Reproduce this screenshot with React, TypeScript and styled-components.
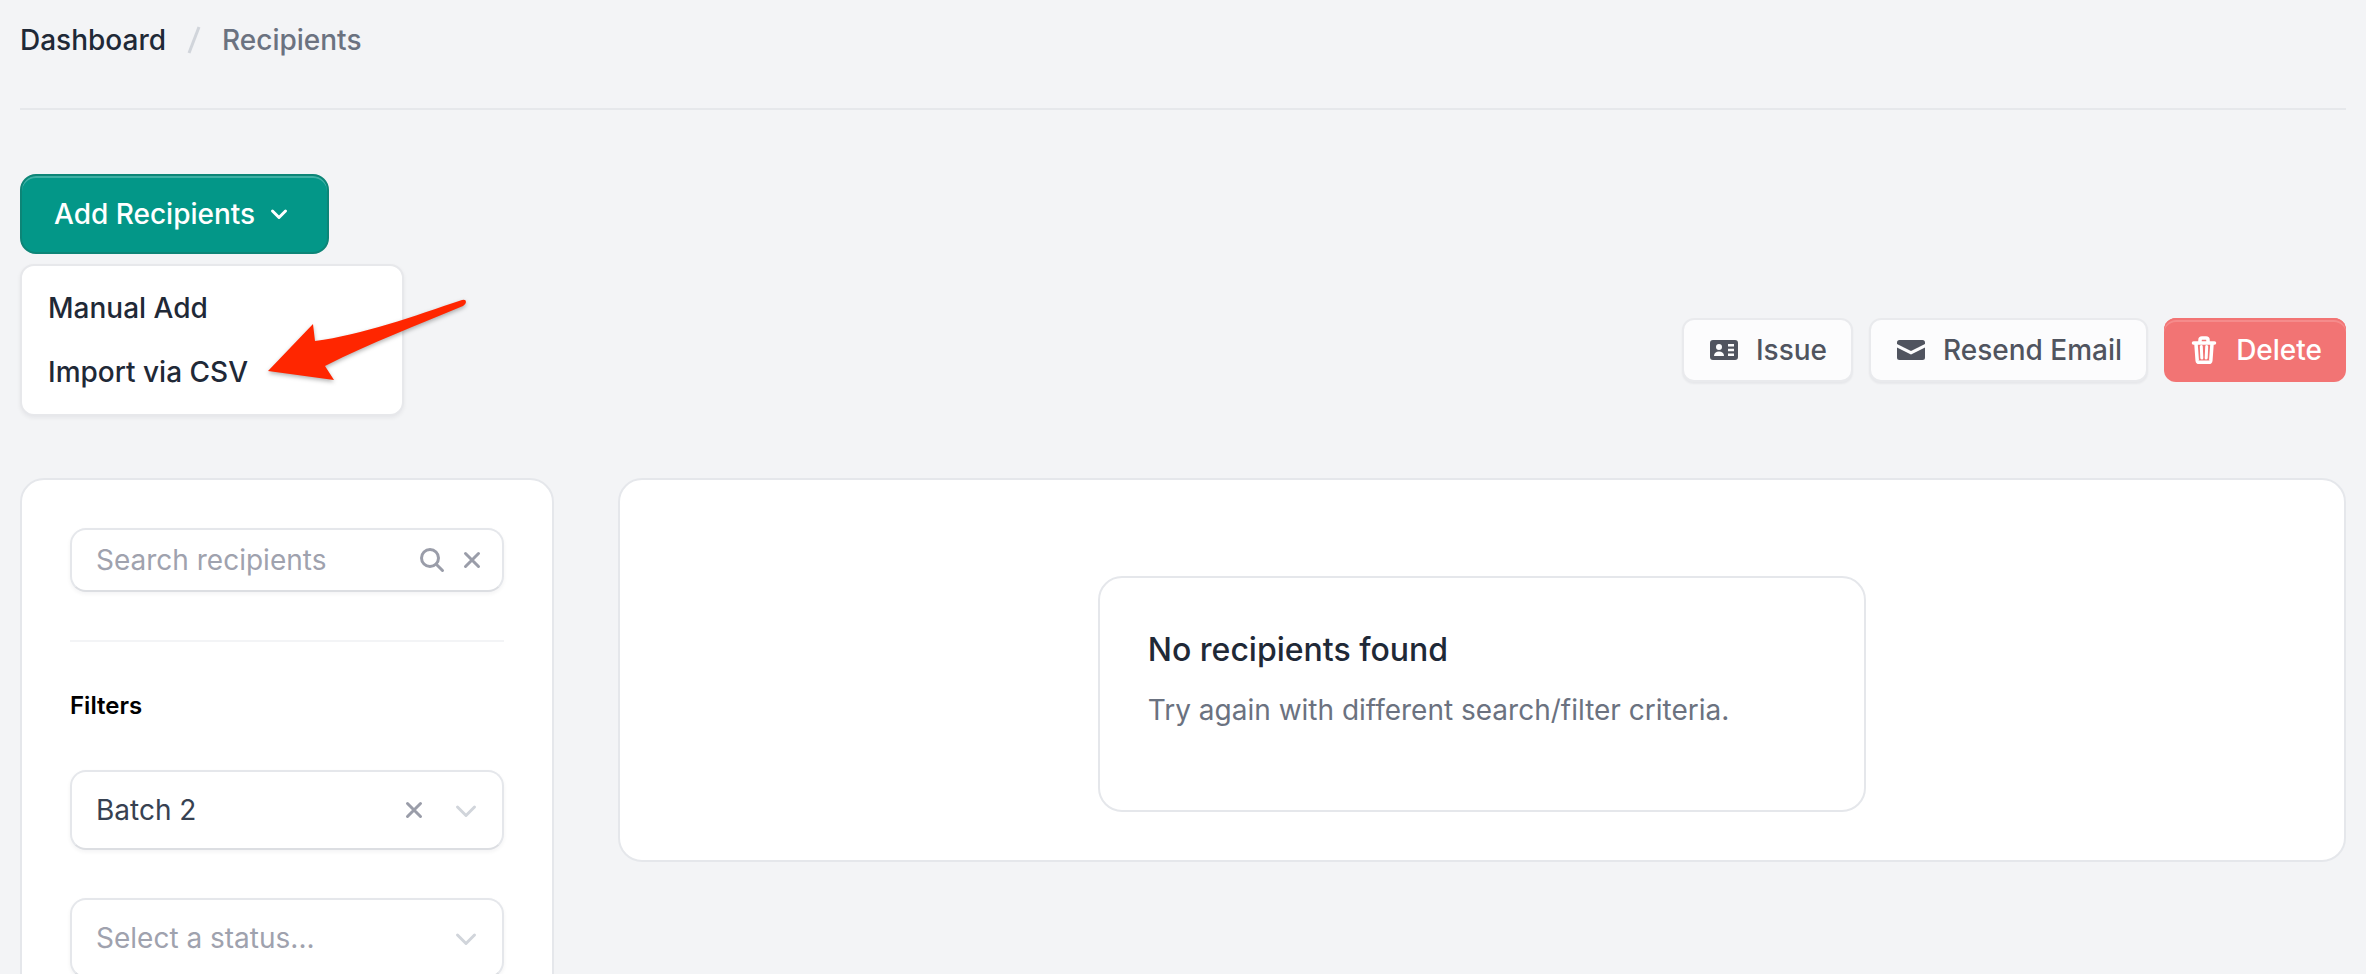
import React, { useState } from "react";
import styled, { createGlobalStyle } from "styled-components";

const GlobalStyle = createGlobalStyle`
  *, *::before, *::after { box-sizing: border-box; }
  html { background: #f3f4f6; }
  body {
    margin: 0;
    font-family: Inter, "Liberation Sans", sans-serif;
    font-size: 28px;
    line-height: 40px;
    color: #1f2937;
  }
  button, input, select { font: inherit; color: inherit; }
`;

const Page = styled.div`
  min-height: 100vh;
  padding: 20px 20px 0;
  background: #f3f4f6;
  overflow: hidden;
`;

const Breadcrumbs = styled.nav`
  display: flex;
  align-items: center;
  gap: 12px;
  padding-bottom: 48px;
  border-bottom: 2px solid #e6e8eb;
  font-weight: 500;
`;

const Crumb = styled.a<{ $current?: boolean }>`
  color: ${(p) => (p.$current ? "#6b7280" : "#1f2937")};
  text-decoration: none;
`;

const Icon = styled.svg`
  width: 32px;
  height: 32px;
  flex: none;
`;

const Separator = styled(Icon)`
  color: #d1d5db;
`;

const Toolbar = styled.div`
  display: flex;
  justify-content: space-between;
  align-items: flex-end;
  height: 208px;
  margin-top: 64px;
  margin-bottom: 96px;
`;

const MenuAnchor = styled.div`
  position: relative;
  align-self: flex-start;
`;

const PrimaryButton = styled.button`
  display: flex;
  align-items: center;
  gap: 8px;
  height: 80px;
  padding: 0 32px;
  border: 2px solid #0d8577;
  border-radius: 16px;
  background: #039788;
  box-shadow: inset 0 2px 0 #3fb0a5;
  color: #fff;
  font-weight: 500;
`;

const Menu = styled.ul`
  position: absolute;
  top: 90px;
  left: 0;
  width: 384px;
  margin: 0;
  padding: 10px 0;
  list-style: none;
  background: #fff;
  border: 2px solid #e7e8eb;
  border-radius: 14px;
  box-shadow: 0 2px 4px rgba(17, 24, 39, 0.06);
`;

const MenuItem = styled.button`
  width: 100%;
  height: 64px;
  padding: 0 26px;
  border: 0;
  background: none;
  text-align: left;
  font-weight: 500;
`;

const Arrow = styled.svg`
  position: absolute;
  top: 120px;
  left: 240px;
  width: 220px;
  height: 100px;
  overflow: visible;
  filter: drop-shadow(0 2px 2px rgba(0, 0, 0, 0.3));
  pointer-events: none;
`;

const Actions = styled.div`
  display: flex;
  gap: 16px;
`;

const ActionButton = styled.button<{ $danger?: boolean }>`
  display: flex;
  align-items: center;
  gap: 16px;
  height: 64px;
  padding: 0 24px;
  border: ${(p) => (p.$danger ? "0" : "2px solid #e9eaed")};
  border-radius: 12px;
  background: ${(p) => (p.$danger ? "#f27474" : "#fcfcfd")};
  box-shadow: ${(p) =>
    p.$danger ? "inset 0 2px 0 #f27474, inset 0 4px 0 #f58b8b" : "0 2px 2px rgba(17, 24, 39, 0.05)"};
  color: ${(p) => (p.$danger ? "#fff" : "#50545f")};
  font-weight: 500;
`;

const Columns = styled.main`
  display: grid;
  grid-template-columns: repeat(12, minmax(0, 1fr));
  align-items: start;
  column-gap: 64px;
`;

const Card = styled.section<{ $span: number }>`
  grid-column: span ${(p) => p.$span};
  background: #fff;
  border: 2px solid #e5e7eb;
  border-radius: 24px;
`;

const FilterCard = styled(Card)`
  display: flex;
  flex-direction: column;
  padding: 48px;
`;

const ResultsCard = styled(Card)`
  display: flex;
  justify-content: center;
  padding: 96px 48px 48px;
`;

const Field = styled.div<{ $tall?: boolean }>`
  display: flex;
  align-items: center;
  height: ${(p) => (p.$tall ? 80 : 64)}px;
  padding-right: 14px;
  border: 2px solid #e5e7eb;
  border-bottom-color: #dcdee2;
  border-radius: 16px;
  background: #fff;
  box-shadow: 0 2px 4px rgba(17, 24, 39, 0.05);
`;

const SearchInput = styled.input`
  flex: 1;
  min-width: 0;
  padding: 0 0 0 24px;
  border: 0;
  outline: 0;
  background: none;
  &::placeholder { color: #9fa2ae; opacity: 1; }
`;

const Select = styled.select<{ $empty?: boolean }>`
  flex: 1;
  min-width: 0;
  height: 100%;
  padding: 0 0 0 24px;
  border: 0;
  outline: 0;
  appearance: none;
  background: none;
  color: ${(p) => (p.$empty ? "#9fa2ae" : "#374151")};
`;

const FieldButtons = styled.div`
  display: flex;
  gap: 8px;
`;

const IconButton = styled.button`
  display: flex;
  padding: 0;
  border: 0;
  background: none;
  color: #9a9da9;
`;

const Chevron = styled(Icon)`
  margin-left: 20px;
  margin-right: 6px;
  color: #d1d5db;
  pointer-events: none;
`;

const Rule = styled.hr`
  width: 100%;
  margin: 48px 0 44px;
  border: 0;
  border-top: 2px solid #f3f4f6;
`;

const FilterTitle = styled.h2`
  margin: 0 0 44px;
  font-size: 24px;
  line-height: 40px;
  font-weight: 600;
  color: #000;
`;

const FilterList = styled.div`
  display: flex;
  flex-direction: column;
  gap: 48px;
`;

const EmptyState = styled.div`
  width: 100%;
  max-width: 768px;
  padding: 48px 48px 80px;
  border: 2px solid #e5e7eb;
  border-radius: 24px;
`;

const EmptyTitle = styled.h3`
  margin: 0 0 16px;
  font-size: 32px;
  line-height: 48px;
  font-weight: 500;
`;

const EmptyText = styled.p`
  margin: 0;
  color: #6b7280;
`;

const Cross = () => (
  <Icon viewBox="0 0 32 32" fill="none" stroke="currentColor" strokeWidth="3" strokeLinecap="round" aria-hidden="true">
    <path d="M9.500 9.500l13 13M22.500 9.500l-13 13" />
  </Icon>
);

const Down = () => (
  <Chevron viewBox="0 0 32 32" fill="none" stroke="currentColor" strokeWidth="3" strokeLinecap="round" strokeLinejoin="round" aria-hidden="true">
    <path d="M7.500 13l8.500 8.500 8.500-8.500" />
  </Chevron>
);

export default function App() {
  const [search, setSearch] = useState("");
  const [batch, setBatch] = useState("2");
  const [status, setStatus] = useState("");

  return (
    <Page>
      <GlobalStyle />
      <Breadcrumbs aria-label="Breadcrumb">
        <Crumb href="#dashboard">Dashboard</Crumb>
        <Separator viewBox="0 0 32 32" fill="none" stroke="currentColor" strokeWidth="3" aria-hidden="true">
          <path d="M11 29L21 3" />
        </Separator>
        <Crumb href="#recipients" $current aria-current="page">Recipients</Crumb>
      </Breadcrumbs>

      <Toolbar>
        <MenuAnchor>
          <PrimaryButton type="button" aria-haspopup="menu" aria-expanded="true">
            Add Recipients
            <Icon viewBox="0 0 32 32" fill="none" stroke="currentColor" strokeWidth="3" strokeLinecap="round" strokeLinejoin="round" aria-hidden="true">
              <path d="M9.500 13l6.500 6.500 6.500-6.500" />
            </Icon>
          </PrimaryButton>
          <Menu>
            <li><MenuItem type="button">Manual Add</MenuItem></li>
            <li><MenuItem type="button">Import via CSV</MenuItem></li>
          </Menu>
          <Arrow viewBox="0 0 220 100" aria-hidden="true">
            <path
              fill="#ff2600"
              d="M8 77L53 30L55 47C102 41 154 22 202 6Q206 5 206 8Q206 10 203 12C158 31 112 48 65 72L74 86Z"
            />
          </Arrow>
        </MenuAnchor>

        <Actions>
          <ActionButton type="button">
            <Icon viewBox="0 0 32 32" fill="currentColor" aria-hidden="true">
              <path fillRule="evenodd" d="M5 6h22a3 3 0 0 1 3 3v14a3 3 0 0 1-3 3H5a3 3 0 0 1-3-3V9a3 3 0 0 1 3-3zM11 10a3 3 0 1 0 0 6 3 3 0 0 0 0-6zM6 22h10c0-3-2-4.500-5-4.500S6 19 6 22zM20 10h6v2.500h-6zM20 14.800h6v2.400h-6zM20 19.500h6V22h-6z" />
            </Icon>
            Issue
          </ActionButton>
          <ActionButton type="button">
            <Icon viewBox="0 0 32 32" fill="currentColor" aria-hidden="true">
              <path d="M2 10V8.500A2.500 2.500 0 0 1 4.500 6h23A2.500 2.500 0 0 1 30 8.500V10l-14 7zM2 13.500l14 7 14-7v10a2.500 2.500 0 0 1-2.500 2.500h-23A2.500 2.500 0 0 1 2 23.500z" />
            </Icon>
            Resend Email
          </ActionButton>
          <ActionButton type="button" $danger>
            <Icon viewBox="0 0 32 32" fill="none" stroke="currentColor" strokeWidth="3.500" strokeLinecap="round" strokeLinejoin="round" aria-hidden="true">
              <path d="M5.500 9h21M12 8V6a2 2 0 0 1 2-2h4a2 2 0 0 1 2 2v2M8 10l1.200 16.500a2 2 0 0 0 2 1.800h9.600a2 2 0 0 0 2-1.800L24 10" />
              <path strokeWidth="3" d="M13.300 12.500l.5 11.500M18.700 12.500l-.5 11.500" />
            </Icon>
            Delete
          </ActionButton>
        </Actions>
      </Toolbar>

      <Columns>
        <FilterCard $span={3}>
          <Field>
            <SearchInput
              type="text"
              aria-label="Search recipients"
              placeholder="Search recipients"
              value={search}
              onChange={(e) => setSearch(e.target.value)}
            />
            <FieldButtons>
              <IconButton type="button" aria-label="Search">
                <Icon viewBox="0 0 32 32" fill="none" stroke="currentColor" strokeWidth="3" strokeLinecap="round" aria-hidden="true">
                  <circle cx="14" cy="14" r="8.500" />
                  <path d="M20.500 20.500l6 6" />
                </Icon>
              </IconButton>
              <IconButton type="button" aria-label="Clear search" onClick={() => setSearch("")}>
                <Cross />
              </IconButton>
            </FieldButtons>
          </Field>
          <Rule />
          <FilterTitle>Filters</FilterTitle>
          <FilterList>
            <Field $tall>
              <Select aria-label="Batch" value={batch} $empty={!batch} onChange={(e) => setBatch(e.target.value)}>
                <option value="">Select a batch...</option>
                <option value="2">Batch 2</option>
              </Select>
              <IconButton type="button" aria-label="Clear batch" onClick={() => setBatch("")}>
                <Cross />
              </IconButton>
              <Down />
            </Field>
            <Field $tall>
              <Select aria-label="Status" value={status} $empty={!status} onChange={(e) => setStatus(e.target.value)}>
                <option value="">Select a status...</option>
              </Select>
              <Down />
            </Field>
          </FilterList>
        </FilterCard>

        <ResultsCard $span={9}>
          <EmptyState>
            <EmptyTitle>No recipients found</EmptyTitle>
            <EmptyText>Try again with different search/filter criteria.</EmptyText>
          </EmptyState>
        </ResultsCard>
      </Columns>
    </Page>
  );
}
